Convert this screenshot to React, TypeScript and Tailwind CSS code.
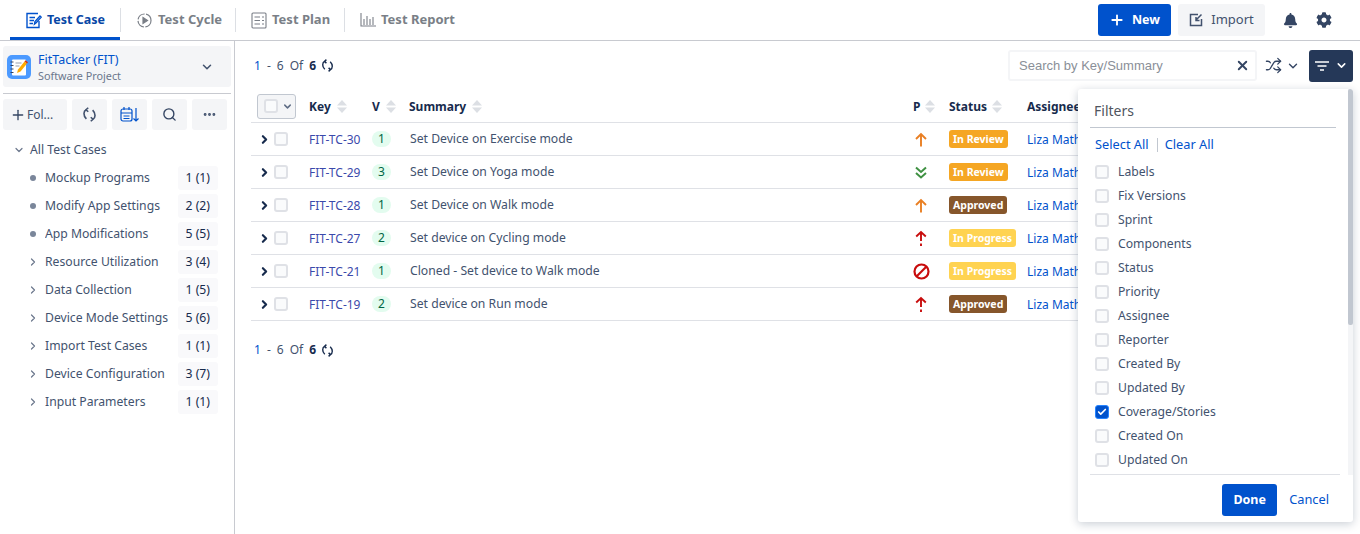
import { Plus, Search, Ellipsis, ChevronDown, ChevronRight, X, Shuffle, Check } from "lucide-react"
import { FaBell, FaCog } from "react-icons/fa"

const folders = [
  { name: "Mockup Programs", count: "1 (1)", leaf: true },
  { name: "Modify App Settings", count: "2 (2)", leaf: true },
  { name: "App Modifications", count: "5 (5)", leaf: true },
  { name: "Resource Utilization", count: "3 (4)" },
  { name: "Data Collection", count: "1 (5)" },
  { name: "Device Mode Settings", count: "5 (6)" },
  { name: "Import Test Cases", count: "1 (1)" },
  { name: "Device Configuration", count: "3 (7)" },
  { name: "Input Parameters", count: "1 (1)" },
]

const rows = [
  { id: "FIT-TC-30", v: 1, summary: "Set Device on Exercise mode", p: "medium", status: "In Review" },
  { id: "FIT-TC-29", v: 3, summary: "Set Device on Yoga mode", p: "lowest", status: "In Review" },
  { id: "FIT-TC-28", v: 1, summary: "Set Device on Walk mode", p: "medium", status: "Approved" },
  { id: "FIT-TC-27", v: 2, summary: "Set device on Cycling mode", p: "critical", status: "In Progress" },
  { id: "FIT-TC-21", v: 1, summary: "Cloned - Set device to Walk mode", p: "blocker", status: "In Progress" },
  { id: "FIT-TC-19", v: 2, summary: "Set device on Run mode", p: "critical", status: "Approved" },
]

const filters = ["Labels", "Fix Versions", "Sprint", "Components", "Status", "Priority", "Assignee", "Reporter", "Created By", "Updated By", "Coverage/Stories", "Created On", "Updated On"]

const statusClass: Record<string, string> = {
  "In Review": "bg-[#f5a623]",
  Approved: "bg-[#86562b]",
  "In Progress": "bg-[#ffd351]",
}

function SortArrows() {
  return (
    <svg width="10" height="13" viewBox="0 0 10 13" className="shrink-0 text-[#dcdfe4]" fill="currentColor">
      <path d="M5 0 10 5.500H0z" />
      <path d="M5 13 0 7.500h10z" />
    </svg>
  )
}

function Box() {
  return <span className="block w-[14px] h-[14px] rounded-[3px] border-2 border-[#dfe1e6] bg-[#fafbfc] shrink-0" />
}

function Cycle({ size = 13, className }: { size?: number; className?: string }) {
  return (
    <svg width={size} height={size} viewBox="0 0 12 12" fill="none" stroke="currentColor" strokeWidth="1.300" className={className}>
      <path d="M5 .6 3.200 2.200 5 3.800M3.200 2.200C1.300 3.200.7 6.800 3.500 9.500" />
      <path d="M7 11.400 8.800 9.800 7 8.200M8.800 9.800C10.700 8.800 11.300 5.200 8.500 2.500" />
    </svg>
  )
}

function Priority({ p }: { p: string }) {
  if (p === "medium")
    return (
      <svg width="12" height="15" viewBox="0 0 12 15" fill="none" stroke="#e97f23" strokeWidth="1.900">
        <path d="M6 14.500V2M1 7l5-5 5 5" />
      </svg>
    )
  if (p === "lowest")
    return (
      <svg width="12" height="13" viewBox="0 0 12 13" fill="none" stroke="#3f9142" strokeWidth="2">
        <path d="M1 1.500 6 6l5-4.500M1 7l5 4.500L11 7" />
      </svg>
    )
  if (p === "critical")
    return (
      <svg width="12" height="17" viewBox="0 0 12 17" fill="none" stroke="#c80d0d" strokeWidth="1.900">
        <path d="M6 11V2M1.200 6.500 6 2l4.800 4.500M6 13.500V16" />
      </svg>
    )
  return (
    <svg width="17" height="17" viewBox="0 0 17 17" fill="none" stroke="#c80d0d" strokeWidth="2.200">
      <circle cx="8.500" cy="8.500" r="7" />
      <path d="M13.500 3.500 3.500 13.500" />
    </svg>
  )
}

function Pager() {
  return (
    <div className="flex items-center text-[12px] text-[#42526e]">
      <span className="text-[#0052cc]">1</span>
      <span className="ml-[6px]">-</span>
      <span className="ml-[6px]">6</span>
      <span className="ml-[6px]">Of</span>
      <span className="ml-[6px] font-bold text-[#172b4d]">6</span>
      <Cycle className="ml-[5px] text-[#172b4d]" />
    </div>
  )
}

function NavTabs() {
  return (
    <div className="flex items-center h-full pl-[10px]">
      <div className="flex items-center gap-[5px] w-[110px] h-full pl-[16px] pt-[3px] border-b-[3px] border-[#0052cc] text-[#0747a6] font-bold text-[12.500px]">
        <svg width="16" height="17" viewBox="0 0 16 17" fill="none" stroke="#0052cc" strokeWidth="1.400">
          <path d="M13 9v6.500H1V1.500h11" />
          <path d="M3.500 5.500H9M3.500 8.500H8M3.500 11.500H7M8.500 12l.5-2.500 5-5.500 1.200 1.200-5 5.500z" />
        </svg>
        Test Case
      </div>
      <div className="w-px h-[24px] bg-[#dcdfe4]" />
      <div className="flex items-center gap-[5px] w-[114px] pl-[15px] text-[#7a7f87] font-bold text-[13px]">
        <svg width="17" height="17" viewBox="0 0 17 17" fill="none" stroke="#7a7f87" strokeWidth="1.200">
          <circle cx="8.500" cy="8.500" r="6.500" strokeDasharray="9 1.500" />
          <path d="M7 5.500 11.500 8.500 7 11.500z" fill="#7a7f87" />
        </svg>
        Test Cycle
      </div>
      <div className="w-px h-[24px] bg-[#dcdfe4]" />
      <div className="flex items-center gap-[5px] w-[108px] pl-[15px] text-[#7a7f87] font-bold text-[13px]">
        <svg width="16" height="17" viewBox="0 0 16 17" fill="none" stroke="#7a7f87" strokeWidth="1.100">
          <rect x="1" y="1" width="14" height="15" rx="1" />
          <path d="M3.500 5H9M3.500 8.500H9M3.500 12H9M11 5h2M11 8.500h2M11 12h2" />
        </svg>
        Test Plan
      </div>
      <div className="w-px h-[24px] bg-[#dcdfe4]" />
      <div className="flex items-center gap-[5px] pl-[15px] text-[#7a7f87] font-bold text-[13px]">
        <svg width="16" height="14" viewBox="0 0 16 14" fill="none" stroke="#7a7f87" strokeWidth="1.100">
          <path d="M1 0v13h15M4 12V6M7 12V3M10 12V6M13 12V4" />
        </svg>
        Test Report
      </div>
    </div>
  )
}

function Sidebar() {
  return (
    <aside className="w-[235px] shrink-0 border-r border-[#c8cad0] pt-[5px] pl-[3px] pr-[3px]">
      <div className="flex items-center h-[41px] w-[228px] bg-[#f4f5f7] rounded-[3px] pl-[4px]">
        <svg width="24" height="24" viewBox="0 0 24 24" className="shrink-0">
          <rect width="24" height="24" rx="5" fill="#4c9aff" />
          <rect x="5" y="4.500" width="14" height="16" rx="1" fill="#fff" />
          <path d="M3.500 7h3M3.500 10.500h3M3.500 14h3M3.500 17.500h3" stroke="#344563" strokeWidth="1" />
          <path d="M8.500 8h6M8.500 11h4" stroke="#97a0af" strokeWidth="1" />
          <path d="M10 18l1-3.500 6.500-8 2.500 2-6.500 8z" fill="#ffab00" />
          <path d="M17.500 6.500 18.500 5.200 21 7.200 20 8.500z" fill="#de350b" />
        </svg>
        <div className="ml-[7px] flex-1 min-w-0">
          <div className="text-[12.500px] leading-[17px] text-[#0052cc]">FitTacker (FIT)</div>
          <div className="text-[10.800px] leading-[15px] text-[#6b778c]">Software Project</div>
        </div>
        <ChevronDown size={14} strokeWidth={2.600} className="text-[#42526e] mr-[17px]" />
      </div>
      <div className="h-px w-[228px] bg-[#c8cad0] mt-[6px]" />
      <div className="flex gap-[5px] mt-[5px]">
        <div className="flex items-center w-[64px] h-[31px] bg-[#f4f5f7] rounded-[3px] pl-[7px] text-[12px] text-[#42526e]">
          <Plus size={16} strokeWidth={2} className="text-[#344563]" />
          <span className="ml-[1px]">Fol...</span>
        </div>
        <div className="flex items-center justify-center w-[35px] h-[31px] bg-[#f4f5f7] rounded-[3px]">
          <Cycle size={15} className="text-[#42526e]" />
        </div>
        <div className="flex items-center justify-center w-[35px] h-[31px] bg-[#f4f5f7] rounded-[3px]">
          <svg width="20" height="18" viewBox="0 0 20 18" fill="none" stroke="#0052cc" strokeWidth="1.200">
            <rect x="1" y="3" width="11" height="12" rx="2" />
            <path d="M1 7h11M4 1v3M9 1v3M3.500 10h6M3.500 12.500h6M16 2v13M13.500 12.500 16 15l2.500-2.500" />
          </svg>
        </div>
        <div className="flex items-center justify-center w-[35px] h-[31px] bg-[#f4f5f7] rounded-[3px]">
          <Search size={15} strokeWidth={2.200} className="text-[#344563]" />
        </div>
        <div className="flex items-center justify-center w-[35px] h-[31px] bg-[#f4f5f7] rounded-[3px]">
          <Ellipsis size={15} strokeWidth={2.600} className="text-[#42526e]" />
        </div>
      </div>
      <div className="flex items-center h-[28px] mt-[6px] pl-[10px] text-[12.200px] text-[#42526e]">
        <ChevronDown size={12} strokeWidth={2.400} className="text-[#6b778c]" />
        <span className="ml-[5px]">All Test Cases</span>
      </div>
      <div className="flex flex-col">
        {folders.map((f) => (
          <div key={f.name} className="flex items-center h-[28px] text-[12.200px] text-[#42526e]">
            <span className="flex items-center justify-center w-[42px] pl-[18px] shrink-0">
              {f.leaf ? (
                <span className="block w-[6px] h-[6px] rounded-full bg-[#7a869a]" />
              ) : (
                <ChevronRight size={12} strokeWidth={2.400} className="text-[#6b778c]" />
              )}
            </span>
            <span className="flex-1 truncate">{f.name}</span>
            <span className="mr-[13px] h-[24px] px-[8px] flex items-center bg-[#f9f9fb] rounded-[3px] text-[#172b4d]">{f.count}</span>
          </div>
        ))}
      </div>
    </aside>
  )
}

function Table() {
  return (
    <div className="mt-[9px] mr-[2px] text-[12px]">
      <div className="flex items-center h-[33px] border-b border-[#dfe1e6] font-bold text-[#172b4d]">
        <div className="w-[58px] pl-[6px]">
          <div className="flex items-center w-[39px] h-[25px] pl-[6px] gap-[4px] rounded-[3px] border border-[#c1c7d0] bg-[#f4f5f7]">
            <Box />
            <ChevronDown size={11} strokeWidth={3.200} className="text-[#5e6c84]" />
          </div>
        </div>
        <div className="w-[63px] pt-[1px] flex items-center gap-[6px]">Key <SortArrows /></div>
        <div className="w-[37px] pt-[1px] flex items-center gap-[6px]">V <SortArrows /></div>
        <div className="w-[504px] pt-[1px] flex items-center gap-[6px]">Summary <SortArrows /></div>
        <div className="w-[36px] pt-[1px] flex items-center gap-[5px]">P <SortArrows /></div>
        <div className="w-[78px] pt-[1px] flex items-center gap-[5px]">Status <SortArrows /></div>
        <div className="pt-[1px] flex items-center gap-[5px]">Assignee</div>
      </div>
      {rows.map((r) => (
        <div key={r.id} className="flex items-center h-[33px] border-b border-[#dfe1e6] text-[#42526e]">
          <div className="w-[58px] pl-[7px] flex items-center gap-[3px]">
            <ChevronRight size={13} strokeWidth={4} className="text-[#172b4d]" />
            <Box />
          </div>
          <div className="w-[63px] pt-[1px] text-[#3b49ab]">{r.id}</div>
          <div className="w-[38px]">
            <span className="flex items-center justify-center w-[19px] h-[16px] rounded-full bg-[#e3fcef] text-[#006644]">{r.v}</span>
          </div>
          <div className="w-[493px] pt-[1px] text-[12.200px]">{r.summary}</div>
          <div className="w-[46px] flex justify-center pr-[10px]"><Priority p={r.p} /></div>
          <div className="w-[78px]">
            <span className={`inline-flex items-center h-[18px] px-[4px] rounded-[3px] text-[10.500px] font-bold text-white ${statusClass[r.status]}`}>{r.status}</span>
          </div>
          <div className="pt-[1px] text-[#0052cc] whitespace-nowrap">Liza Mathew</div>
        </div>
      ))}
    </div>
  )
}

function FilterPanel() {
  return (
    <div className="absolute left-[843px] top-[48px] w-[275px] h-[433px] bg-white rounded-[3px] shadow-[0_2px_10px_rgba(9,30,66,0.22)] overflow-hidden">
      <div className="absolute right-0 top-0 w-[5px] h-[386px] bg-[#f4f5f7]">
        <div className="w-full h-[236px] bg-[#c1c7d0] rounded-[2px]" />
      </div>
      <div className="ml-[12px] mr-[17px] h-[39px] flex items-center pl-[4px] pt-[4px] text-[14px] text-[#505560] border-b border-[#c1c7d0]">Filters</div>
      <div className="flex items-center ml-[17px] mt-[8px] h-[18px] text-[12.800px] text-[#0052cc]">
        <span>Select All</span>
        <span className="w-px h-[14px] bg-[#c1c7d0] ml-[8px] mr-[7px]" />
        <span>Clear All</span>
      </div>
      <div className="mt-[6px] flex flex-col">
        {filters.map((f) => (
          <div key={f} className="flex items-center h-[24px] pl-[17px] gap-[9px] text-[12.200px] text-[#42526e]">
            {f === "Coverage/Stories" ? (
              <span className="flex items-center justify-center w-[14px] h-[14px] rounded-[3px] bg-[#0052cc] border border-[#2684ff]">
                <Check size={10} strokeWidth={4} className="text-white" />
              </span>
            ) : (
              <Box />
            )}
            {f}
          </div>
        ))}
      </div>
      <div className="absolute left-[12px] right-[13px] top-[385px] h-px bg-[#dfe1e6]" />
      <div className="absolute right-[24px] top-[395px] flex items-center gap-[12px]">
        <span className="flex items-center justify-center w-[55px] h-[32px] rounded-[3px] bg-[#0052cc] text-white text-[12.500px] font-bold">Done</span>
        <span className="text-[12.800px] text-[#0052cc]">Cancel</span>
      </div>
    </div>
  )
}

export default function App() {
  return (
    <div className="w-[1360px] h-[534px] overflow-hidden bg-white font-['Noto_Sans','Open_Sans',sans-serif]">
      <header className="flex items-center justify-between h-[41px] border-b border-[#c8cad0]">
        <NavTabs />
        <div className="flex items-center mr-[28px]">
          <div className="flex items-center justify-center gap-[7px] w-[73px] h-[32px] rounded-[3px] bg-[#0052cc] text-white text-[12.500px] font-bold">
            <Plus size={16} strokeWidth={2.800} /> New
          </div>
          <div className="flex items-center justify-center gap-[8px] w-[87px] h-[32px] ml-[7px] rounded-[3px] bg-[#f4f5f7] text-[#42526e] text-[13px]">
            <svg width="14" height="14" viewBox="0 0 14 14" fill="none" stroke="#42526e" strokeWidth="1.500">
              <path d="M9 1.500H1.500v11h11V6M12.500 1.500 7 7M7 4v3.500h3.500" />
            </svg>
            Import
          </div>
          <FaBell size={15} className="text-[#344563] ml-[18px]" />
          <FaCog size={16} className="text-[#344563] ml-[18px]" />
        </div>
      </header>
      <div className="flex h-[493px]">
        <Sidebar />
        <main className="relative flex-1 pl-[16px] pr-[7px] pt-[9px]">
          <div className="flex items-center justify-between h-[31px]">
            <div className="pl-[3px]"><Pager /></div>
            <div className="flex items-center">
              <div className="flex items-center w-[249px] h-[31px] px-[9px] rounded-[3px] border-2 border-[#f4f5f7] text-[13px] text-[#8a8f98] font-['Liberation_Sans',sans-serif]">
                <span className="flex-1">Search by Key/Summary</span>
                <X size={15} strokeWidth={3} className="text-[#344563] -mr-[4px]" />
              </div>
              <Shuffle size={17} strokeWidth={1.800} className="text-[#344563] ml-[8px]" />
              <ChevronDown size={14} strokeWidth={2.400} className="text-[#344563] ml-[4px]" />
              <div className="flex items-center justify-center gap-[6px] w-[44px] h-[32px] ml-[9px] rounded-[3px] bg-[#253858]">
                <svg width="14" height="10" viewBox="0 0 14 10" fill="none" stroke="#fff" strokeWidth="1.400">
                  <path d="M0 1h14M2.500 5h9M5 9h4" />
                </svg>
                <ChevronDown size={13} strokeWidth={2.800} className="text-white" />
              </div>
            </div>
          </div>
          <Table />
          <div className="mt-[20px] pl-[3px]"><Pager /></div>
          <FilterPanel />
        </main>
      </div>
    </div>
  )
}
